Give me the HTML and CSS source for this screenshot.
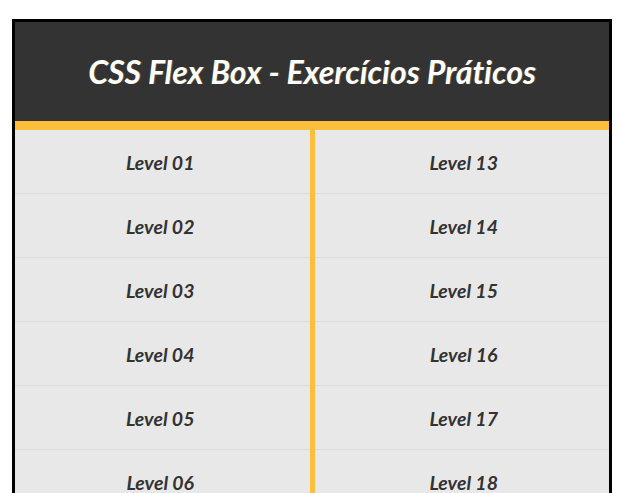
FILE: index.html
```html
<!DOCTYPE html>
<html lang="pt">
<head>
<meta charset="utf-8">
<title>CSS Flex Box - Exercícios Práticos</title>
<link rel="stylesheet" href="styles.css">
</head>
<body>
<div class="page">
  <div class="card">
    <header class="header">
      <h1 class="title">CSS Flex Box - Exercícios Práticos</h1>
    </header>
    <div class="columns">
      <ul class="list list-left">
        <li class="item">Level 01</li>
        <li class="item">Level 02</li>
        <li class="item">Level 03</li>
        <li class="item">Level 04</li>
        <li class="item">Level 05</li>
        <li class="item">Level 06</li>
        <li class="item">Level 07</li>
        <li class="item">Level 08</li>
        <li class="item">Level 09</li>
        <li class="item">Level 10</li>
        <li class="item">Level 11</li>
        <li class="item">Level 12</li>
      </ul>
      <ul class="list list-right">
        <li class="item">Level 13</li>
        <li class="item">Level 14</li>
        <li class="item">Level 15</li>
        <li class="item">Level 16</li>
        <li class="item">Level 17</li>
        <li class="item">Level 18</li>
        <li class="item">Level 19</li>
        <li class="item">Level 20</li>
        <li class="item">Level 21</li>
        <li class="item">Level 22</li>
        <li class="item">Level 23</li>
        <li class="item">Level 24</li>
      </ul>
    </div>
  </div>
</div>
</body>
</html>
```

FILE: styles.css
```css
html, body {
  margin: 0;
  padding: 0;
  background: #ffffff;
}

body {
  font-family: Lato, "Open Sans", sans-serif;
  font-variant-ligatures: none;
}

.page {
  padding: 19px 0 0 12px;
}

.card {
  width: 594px;
  border: 3px solid #000000;
  background: #e8e8e8;
}

.header {
  height: 99px;
  background: #333333;
  border-bottom: 9px solid #fcbf3b;
  display: flex;
  align-items: center;
  justify-content: center;
}

.title {
  margin: 0;
  color: #ffffff;
  font-size: 32px;
  font-weight: 700;
  font-style: italic;
  letter-spacing: 0;
  text-shadow: 1px 0 0 rgba(252, 191, 59, 0.25);
}

.columns {
  display: flex;
}

.list {
  list-style: none;
  margin: 0;
  padding: 0;
  flex: 1 1 0;
}

.list-left {
  border-right: 5px solid #fcbf3b;
}

.item {
  box-sizing: border-box;
  height: 64px;
  padding-top: 2px;
  border-bottom: 1px solid #dcdcdc;
  display: flex;
  align-items: center;
  justify-content: center;
  color: #333333;
  font-size: 19.5px;
  font-weight: 700;
  font-style: italic;
}

.list-left .item {
  padding-right: 4px;
}

.list-right .item {
  padding-left: 4px;
}
```
